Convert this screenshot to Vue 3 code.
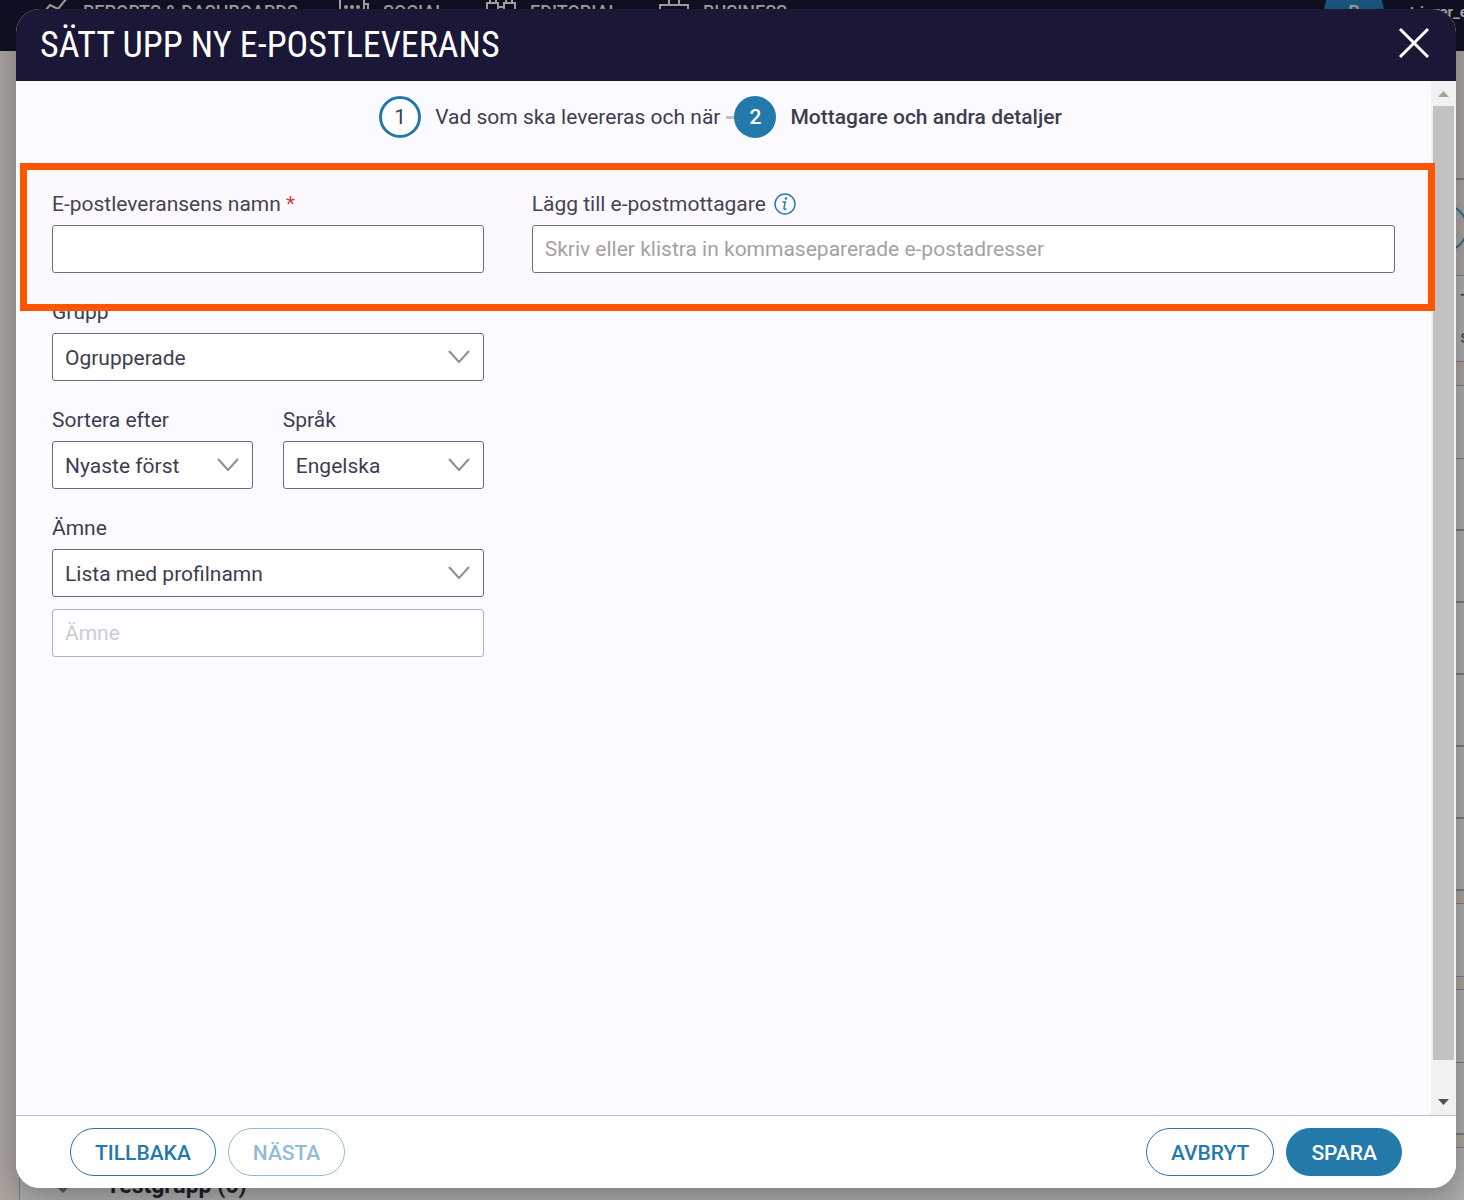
<script setup>
import { ref } from 'vue'

const name = ref('')
const recipients = ref('')
const group = ref('Ogrupperade')
const sorting = ref('Nyaste först')
const language = ref('Engelska')
const subject = ref('Lista med profilnamn')

const bands = [
  { h: 127, kind: 'gap' },
  { h: 97, kind: 'gap thick', ring: true },
  { h: 86, kind: 'card', side: true },
  { h: 24, kind: 'gap line' },
  { h: 73, kind: 'card' },
  { h: 71, kind: 'card' },
  { h: 72, kind: 'card thick' },
  { h: 72, kind: 'card thick' },
  { h: 72, kind: 'card thick' },
  { h: 72, kind: 'card thick' },
  { h: 72, kind: 'card thick' },
  { h: 14, kind: 'gap thick' },
  { h: 73, kind: 'card' },
  { h: 13, kind: 'gap line' },
  { h: 73, kind: 'card' },
  { h: 71, kind: 'card' },
  { h: 14, kind: 'gap thick' },
  { h: 76, kind: 'card', title: 'Testgrupp (6)' },
]
</script>

<template>
  <div class="screen">
    <div class="backdrop" aria-hidden="true">
      <div class="topbar">
        <div class="nav">
          <span class="nav-item">
            <svg class="nav-icon" viewBox="0 0 30 24"><path d="M6 11l5-6 8 4L28-2" /></svg>
            REPORTS &amp; DASHBOARDS
          </span>
          <span class="nav-item">
            <svg class="nav-icon" viewBox="0 0 30 24"><path d="M1-4v24h28V4h-4v6M25-2v6" /><circle cx="7" cy="7" r="1" /><circle cx="13" cy="7" r="1" /><circle cx="19" cy="7" r="1" /></svg>
            SOCIAL
          </span>
          <span class="nav-item">
            <svg class="nav-icon" viewBox="0 0 30 24"><path d="M1 20V3h11v17M18 20V3h11v17M12 7h6M4 3V-1h6v4M20 3V-1h6v4" /></svg>
            EDITORIAL
          </span>
          <span class="nav-item">
            <svg class="nav-icon" viewBox="0 0 30 24"><path d="M1 20V5h28v15zM10 5V-1M20 5V-1" /></svg>
            BUSINESS
          </span>
        </div>
        <div class="account">
          <span class="avatar">R</span>
          <span class="user">retriever_e</span>
        </div>
      </div>
      <div class="bands">
        <div v-for="(b, i) in bands" :key="i" :class="['band', b.kind]" :style="{ height: b.h + 'px' }">
          <i v-if="b.ring" class="ring"></i>
          <template v-if="b.title">
            <svg class="fold" viewBox="0 0 14 10"><path d="M1 2l6 6 6-6" /></svg>
            <b>{{ b.title }}</b>
          </template>
          <span v-if="b.side" class="side">T<br />s</span>
        </div>
      </div>
    </div>

    <section class="modal" role="dialog" aria-labelledby="dialog-title">
      <header class="modal-head">
        <h1 id="dialog-title">SÄTT UPP NY E-POSTLEVERANS</h1>
        <button class="close" type="button" aria-label="Stäng">
          <svg viewBox="0 0 30 30"><path d="M1 1l28 28M29 1L1 29" /></svg>
        </button>
      </header>

      <div class="modal-body">
        <div class="content">
          <ol class="steps">
            <li class="step">
              <span class="num">1</span>
              <span>Vad som ska levereras och när</span>
            </li>
            <li class="link"></li>
            <li class="step current">
              <span class="num">2</span>
              <span>Mottagare och andra detaljer</span>
            </li>
          </ol>

          <form class="form">
            <div class="row marked">
              <div class="field">
                <label for="name">E-postleveransens namn <em>*</em></label>
                <input id="name" v-model="name" type="text" />
              </div>
              <div class="field">
                <label for="recipients">
                  Lägg till e-postmottagare
                  <svg class="info" viewBox="0 0 22 22">
                    <circle cx="11" cy="11" r="10" />
                    <path d="M8.500 9h2.800L10 15.200q-.200 1.600 1.200 1.200l1.300-.700" />
                    <circle class="dot" cx="12" cy="5.500" r="1.300" />
                  </svg>
                </label>
                <input id="recipients" v-model="recipients" type="text" placeholder="Skriv eller klistra in kommaseparerade e-postadresser" />
              </div>
              <div class="frame"></div>
            </div>

            <div class="row">
              <div class="column">
                <div class="field">
                  <label for="group">Grupp</label>
                  <div class="select">
                    <select id="group" v-model="group"><option>Ogrupperade</option></select>
                    <svg viewBox="0 0 20 12"><path d="M0 0l10 11L20 0" /></svg>
                  </div>
                </div>
                <div class="pair">
                  <div class="field">
                    <label for="sorting">Sortera efter</label>
                    <div class="select">
                      <select id="sorting" v-model="sorting"><option>Nyaste först</option></select>
                      <svg viewBox="0 0 20 12"><path d="M0 0l10 11L20 0" /></svg>
                    </div>
                  </div>
                  <div class="field">
                    <label for="language">Språk</label>
                    <div class="select">
                      <select id="language" v-model="language"><option>Engelska</option></select>
                      <svg viewBox="0 0 20 12"><path d="M0 0l10 11L20 0" /></svg>
                    </div>
                  </div>
                </div>
                <div class="field">
                  <label for="subject">Ämne</label>
                  <div class="select">
                    <select id="subject" v-model="subject"><option>Lista med profilnamn</option></select>
                    <svg viewBox="0 0 20 12"><path d="M0 0l10 11L20 0" /></svg>
                  </div>
                  <input class="extra" type="text" placeholder="Ämne" aria-label="Ämne" disabled />
                </div>
              </div>
            </div>
          </form>
        </div>

        <div class="scrollbar" aria-hidden="true">
          <svg class="arrow up" viewBox="0 0 25 25"><path d="M7 16l5.500-6 5.500 6z" /></svg>
          <div class="track"><div class="thumb"></div></div>
          <svg class="arrow" viewBox="0 0 25 25"><path d="M7 9l5.500 6L18 9z" /></svg>
        </div>
      </div>

      <footer class="modal-foot">
        <div class="group">
          <button class="btn" type="button">TILLBAKA</button>
          <button class="btn" type="button" disabled>NÄSTA</button>
        </div>
        <div class="group">
          <button class="btn" type="button">AVBRYT</button>
          <button class="btn primary" type="button">SPARA</button>
        </div>
      </footer>
    </section>
  </div>
</template>

<style>
body {
  margin: 0;
}
</style>

<style scoped>
* {
  box-sizing: border-box;
}
.screen {
  position: relative;
  display: flex;
  min-height: 100vh;
  font-family: Roboto, sans-serif;
  font-size: 21px;
  color: #3e3d50;
}
svg {
  fill: none;
  display: block;
  overflow: visible;
}

/* dimmed page behind the dialog */
.backdrop {
  position: absolute;
  inset: 0;
  overflow: hidden;
  background: #aba49f;
}
.topbar {
  display: flex;
  align-items: flex-start;
  justify-content: space-between;
  height: 51px;
  padding-left: 39px;
  background: #0f1023;
  color: #a9a7a4;
  font-size: 18px;
  font-weight: 500;
  line-height: 24px;
  white-space: nowrap;
}
.nav {
  display: flex;
  gap: 41px;
}
.nav-item {
  display: flex;
  gap: 14px;
}
.nav-icon {
  width: 30px;
  height: 24px;
  stroke: #a9a7a4;
  stroke-width: 2;
}
.account {
  display: flex;
  align-items: center;
  gap: 12px;
  width: 140px;
  height: 24px;
}
.avatar {
  flex: none;
  width: 60px;
  height: 60px;
  border-radius: 50%;
  background: #1b5a80;
  line-height: 60px;
  text-align: center;
}
.user {
  font-size: 15px;
  font-weight: 700;
}
.bands {
  padding-left: 19px;
}
.band {
  display: flex;
  align-items: center;
  gap: 36px;
  border-top: 1px solid #7c7a80;
}
.band.thick {
  border-top-width: 2px;
}
.band.gap {
  border-top-color: #aba49f;
}
.band.gap.line,
.band.gap.thick {
  border-top-color: #7c7a80;
}
.band.card {
  padding-left: 36px;
  border-left: 1px solid #7c7a80;
  background: #adadad;
}
.band b {
  color: #1f1e2b;
  font-size: 23px;
}
.fold {
  width: 14px;
  height: 10px;
  margin-top: 4px;
  stroke: #55535f;
  stroke-width: 3;
}
.ring {
  width: 60px;
  height: 48px;
  margin-left: auto;
  margin-right: -4px;
  border: 2px solid #2a6d94;
  border-radius: 24px;
}
.side {
  margin-left: auto;
  margin-right: -7px;
  font-size: 18px;
  line-height: 36px;
}

/* dialog */
.modal {
  position: relative;
  display: flex;
  flex: 1;
  flex-direction: column;
  min-width: 0;
  margin: 9px 8px 12px 16px;
  border-radius: 24px;
  background: #fff;
  box-shadow: 0 8px 32px rgba(0, 0, 0, 0.3);
}
.modal-head {
  display: flex;
  align-items: center;
  justify-content: space-between;
  height: 72px;
  padding: 0 27px 0 24px;
  border-radius: 24px 24px 0 0;
  background: #1a1836;
  color: #fff;
}
h1 {
  margin: 0;
  font-family: "Roboto Condensed", Roboto, sans-serif;
  font-size: 36px;
  font-weight: 400;
  line-height: 48px;
}
.close {
  width: 30px;
  height: 30px;
  margin: 0 0 4px;
  padding: 0;
  border: 0;
  background: none;
}
.close svg {
  width: 30px;
  height: 30px;
  stroke: #fff;
  stroke-width: 3;
}
.modal-body {
  display: flex;
  flex: 1;
  background: #fbfaff;
}
.content {
  flex: 1;
  min-width: 0;
  padding: 15px 36px 36px;
}
.steps {
  display: flex;
  align-items: center;
  justify-content: center;
  margin: 0 6px 53px 0;
  padding: 0;
  list-style: none;
}
.step {
  display: flex;
  align-items: center;
  gap: 14px;
}
.current {
  font-weight: 500;
}
.num {
  display: flex;
  align-items: center;
  justify-content: center;
  width: 42px;
  height: 42px;
  border: 3px solid #2479ab;
  border-radius: 50%;
  background: #fff;
}
.current .num {
  background: #2479ab;
  color: #fff;
}
.link {
  width: 8px;
  height: 3px;
  margin-left: 6px;
  background: #c3c2cc;
}
.form,
.column {
  display: flex;
  flex-direction: column;
  gap: 26px;
}
.row {
  display: grid;
  grid-template-columns: 1fr 2fr;
  gap: 48px;
}
.marked {
  position: relative;
}
.frame {
  position: absolute;
  inset: -28px -40px -38px -32px;
  border: 7px solid #ff5500;
  background: rgba(255, 235, 200, 0.04);
  pointer-events: none;
}
.pair {
  display: grid;
  grid-template-columns: 1fr 1fr;
  gap: 30px;
}
.field {
  min-width: 0;
}
label {
  display: flex;
  align-items: center;
  gap: 8px;
  margin-bottom: 8px;
  line-height: 26px;
}
label em {
  color: #d63a3a;
  font-style: normal;
  margin-left: -3px;
}
.info {
  width: 22px;
  height: 22px;
  stroke: #2479ab;
  stroke-width: 1.5;
}
.info .dot {
  fill: #2479ab;
  stroke: none;
}
input,
select {
  display: block;
  width: 100%;
  height: 48px;
  margin: 0;
  padding: 0 12px;
  border: 1px solid #6c6a80;
  border-radius: 3px;
  background: #fff;
  color: #3e3d50;
  font: inherit;
}
input::placeholder {
  color: #a09fa6;
  opacity: 1;
}
.extra {
  margin-top: 12px;
  opacity: 0.5;
}
.select {
  position: relative;
}
select {
  padding-top: 2px;
  appearance: none;
}
.select svg {
  position: absolute;
  top: 18px;
  right: 15px;
  width: 20px;
  height: 12px;
  stroke: #8e8c9f;
  stroke-width: 2;
  pointer-events: none;
}
.scrollbar {
  display: flex;
  flex-direction: column;
  width: 25px;
  background: #f1f1f1;
}
.arrow {
  width: 25px;
  height: 25px;
  fill: #505050;
}
.arrow.up {
  fill: #a3a3a3;
}
.track {
  flex: 1;
  padding: 0 2px;
}
.thumb {
  height: 97%;
  background: #c1c1c1;
}
.modal-foot {
  display: flex;
  justify-content: space-between;
  padding: 12px 54px;
  border-top: 1px solid #bcbbc6;
  border-radius: 0 0 24px 24px;
  background: #fff;
}
.group {
  display: flex;
  gap: 12px;
}
.btn {
  height: 48px;
  margin: 0;
  padding: 2px 24px 0;
  border: 1px solid #2479ab;
  border-radius: 24px;
  background: #fff;
  color: #2479ab;
  font: inherit;
  font-weight: 500;
}
.btn:disabled {
  opacity: 0.5;
}
.btn.primary {
  background: #2479ab;
  color: #fff;
}
</style>
